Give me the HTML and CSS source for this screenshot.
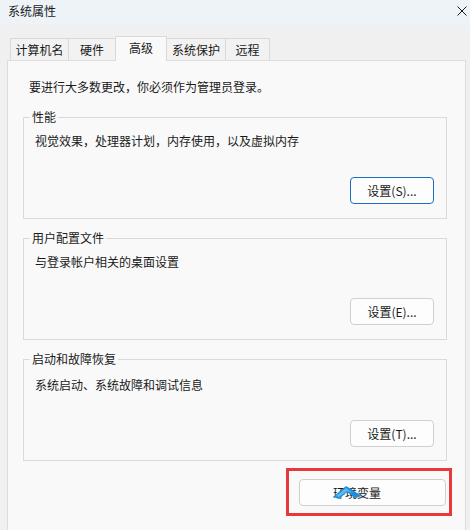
FILE: index.html
```html
<!DOCTYPE html>
<html lang="zh-CN">
<head>
<meta charset="utf-8">
<title>系统属性</title>
<link rel="stylesheet" href="styles.css">
</head>
<body>
<div class="window">
  <div class="titlebar">
    <span class="title">系统属性</span>
    <svg class="close" width="10" height="10" viewBox="0 0 10 10"><path d="M0.5 0.5 L9.5 9.5 M9.5 0.5 L0.5 9.5" stroke="#1a1a1a" stroke-width="1" fill="none"/></svg>
  </div>
  <div class="tabs">
    <div class="tab t1">计算机名</div>
    <div class="tab t2">硬件</div>
    <div class="tab t3 active">高级</div>
    <div class="tab t4">系统保护</div>
    <div class="tab t5">远程</div>
  </div>
  <div class="panel">
    <p class="notice">要进行大多数更改，你必须作为管理员登录。</p>

    <fieldset class="group g1">
      <legend>性能</legend>
      <p class="desc">视觉效果，处理器计划，内存使用，以及虚拟内存</p>
      <div class="btnrow"><button class="btn focused">设置(S)...</button></div>
    </fieldset>

    <fieldset class="group g2">
      <legend>用户配置文件</legend>
      <p class="desc">与登录帐户相关的桌面设置</p>
      <div class="btnrow"><button class="btn">设置(E)...</button></div>
    </fieldset>

    <fieldset class="group g3">
      <legend>启动和故障恢复</legend>
      <p class="desc">系统启动、系统故障和调试信息</p>
      <div class="btnrow"><button class="btn">设置(T)...</button></div>
    </fieldset>

    <div class="envrow">
      <div class="highlight">
        <button class="btn env">环境变量
          <svg class="cursor" width="30" height="14" viewBox="0 0 30 14">
            <polygon points="0,11 13,0 29,10 22,12 14,6 6,13" fill="#1b8fdc"/>
            <polygon points="3,10 13,2 20,7 14,5 6,11" fill="#5cb8f0"/>
          </svg>
        </button>
      </div>
    </div>
  </div>
</div>
</body>
</html>
```

FILE: styles.css
```css
* { box-sizing: border-box; }

html, body {
  margin: 0;
  padding: 0;
}

body {
  width: 470px;
  height: 530px;
  overflow: hidden;
  background: #f0f0f0;
  font-family: "Noto Sans CJK SC", "Noto Sans", sans-serif;
  font-size: 12px;
  color: #1a1a1a;
}

.window {
  width: 470px;
  height: 530px;
  display: flex;
  flex-direction: column;
}

.titlebar {
  height: 25px;
  background: #eef3f8;
  display: flex;
  align-items: center;
  justify-content: space-between;
  padding: 0 3px 3px 8px;
  line-height: 16px;
}

.title {
  font-size: 12px;
}

.close {
  display: block;
}

.tabs {
  height: 35px;
  display: flex;
  align-items: flex-end;
  padding-left: 10px;
  position: relative;
  z-index: 2;
}

.tab {
  height: 22px;
  border: 1px solid #d9d9d9;
  border-bottom: none;
  background: #f2f2f2;
  display: flex;
  align-items: center;
  justify-content: center;
  line-height: 16px;
  padding-top: 1px;
  margin-right: -1px;
}

.t1 { width: 59px; }
.t2 { width: 48px; }
.t3 { width: 52px; }
.t4 { width: 60px; }
.t5 { width: 45px; }

.tab.active {
  height: 25px;
  background: #f9f9f9;
  margin-bottom: -1px;
  padding-top: 0;
  padding-bottom: 2px;
  position: relative;
  z-index: 3;
}

.panel {
  flex: 1;
  margin-left: 7px;
  width: 459px;
  border: 1px solid #dcdcdc;
  border-bottom: none;
  background: #f9f9f9;
  padding: 0 18px 0 15px;
  position: relative;
  z-index: 1;
}

.notice {
  margin: 18px 0 0 6px;
  line-height: 16px;
}

.group {
  margin: 0;
  padding: 0 0 14px 0;
  border: 1px solid #dadada;
  min-width: 0;
}

.g1 { margin-top: 14px; }
.g2 { margin-top: 11px; }
.g3 { margin-top: 11px; padding-bottom: 13px; }

.group legend {
  margin-left: 6px;
  padding: 0 2px;
  line-height: 16px;
  font-size: 12px;
}

.desc {
  margin: 8px 0 0 11px;
  line-height: 16px;
}

.g3 .desc { margin-top: 10px; }

.btnrow {
  display: flex;
  justify-content: flex-end;
  padding-right: 12px;
  margin-top: 28px;
}

.g3 .btnrow { margin-top: 27px; }

.btn {
  width: 84px;
  height: 27px;
  border: 1px solid #d0d0d0;
  border-radius: 4px;
  background: #fdfdfd;
  font-family: "Noto Sans CJK SC", "Noto Sans", sans-serif;
  font-size: 12px;
  color: #1a1a1a;
  line-height: 16px;
  padding: 0;
  margin: 0;
}

.btn.focused {
  border: 1px solid #1a6fc0;
}

.envrow {
  display: flex;
  justify-content: flex-end;
  margin-top: 7px;
  margin-right: -5px;
}

.highlight {
  width: 166px;
  height: 48px;
  border: 3px solid #e8383d;
  padding: 8px 3px 0 10px;
}

.btn.env {
  width: 147px;
  height: 27px;
  text-align: left;
  padding-left: 33px;
  position: relative;
}

.cursor {
  position: absolute;
  left: 33px;
  top: 6px;
}
```
